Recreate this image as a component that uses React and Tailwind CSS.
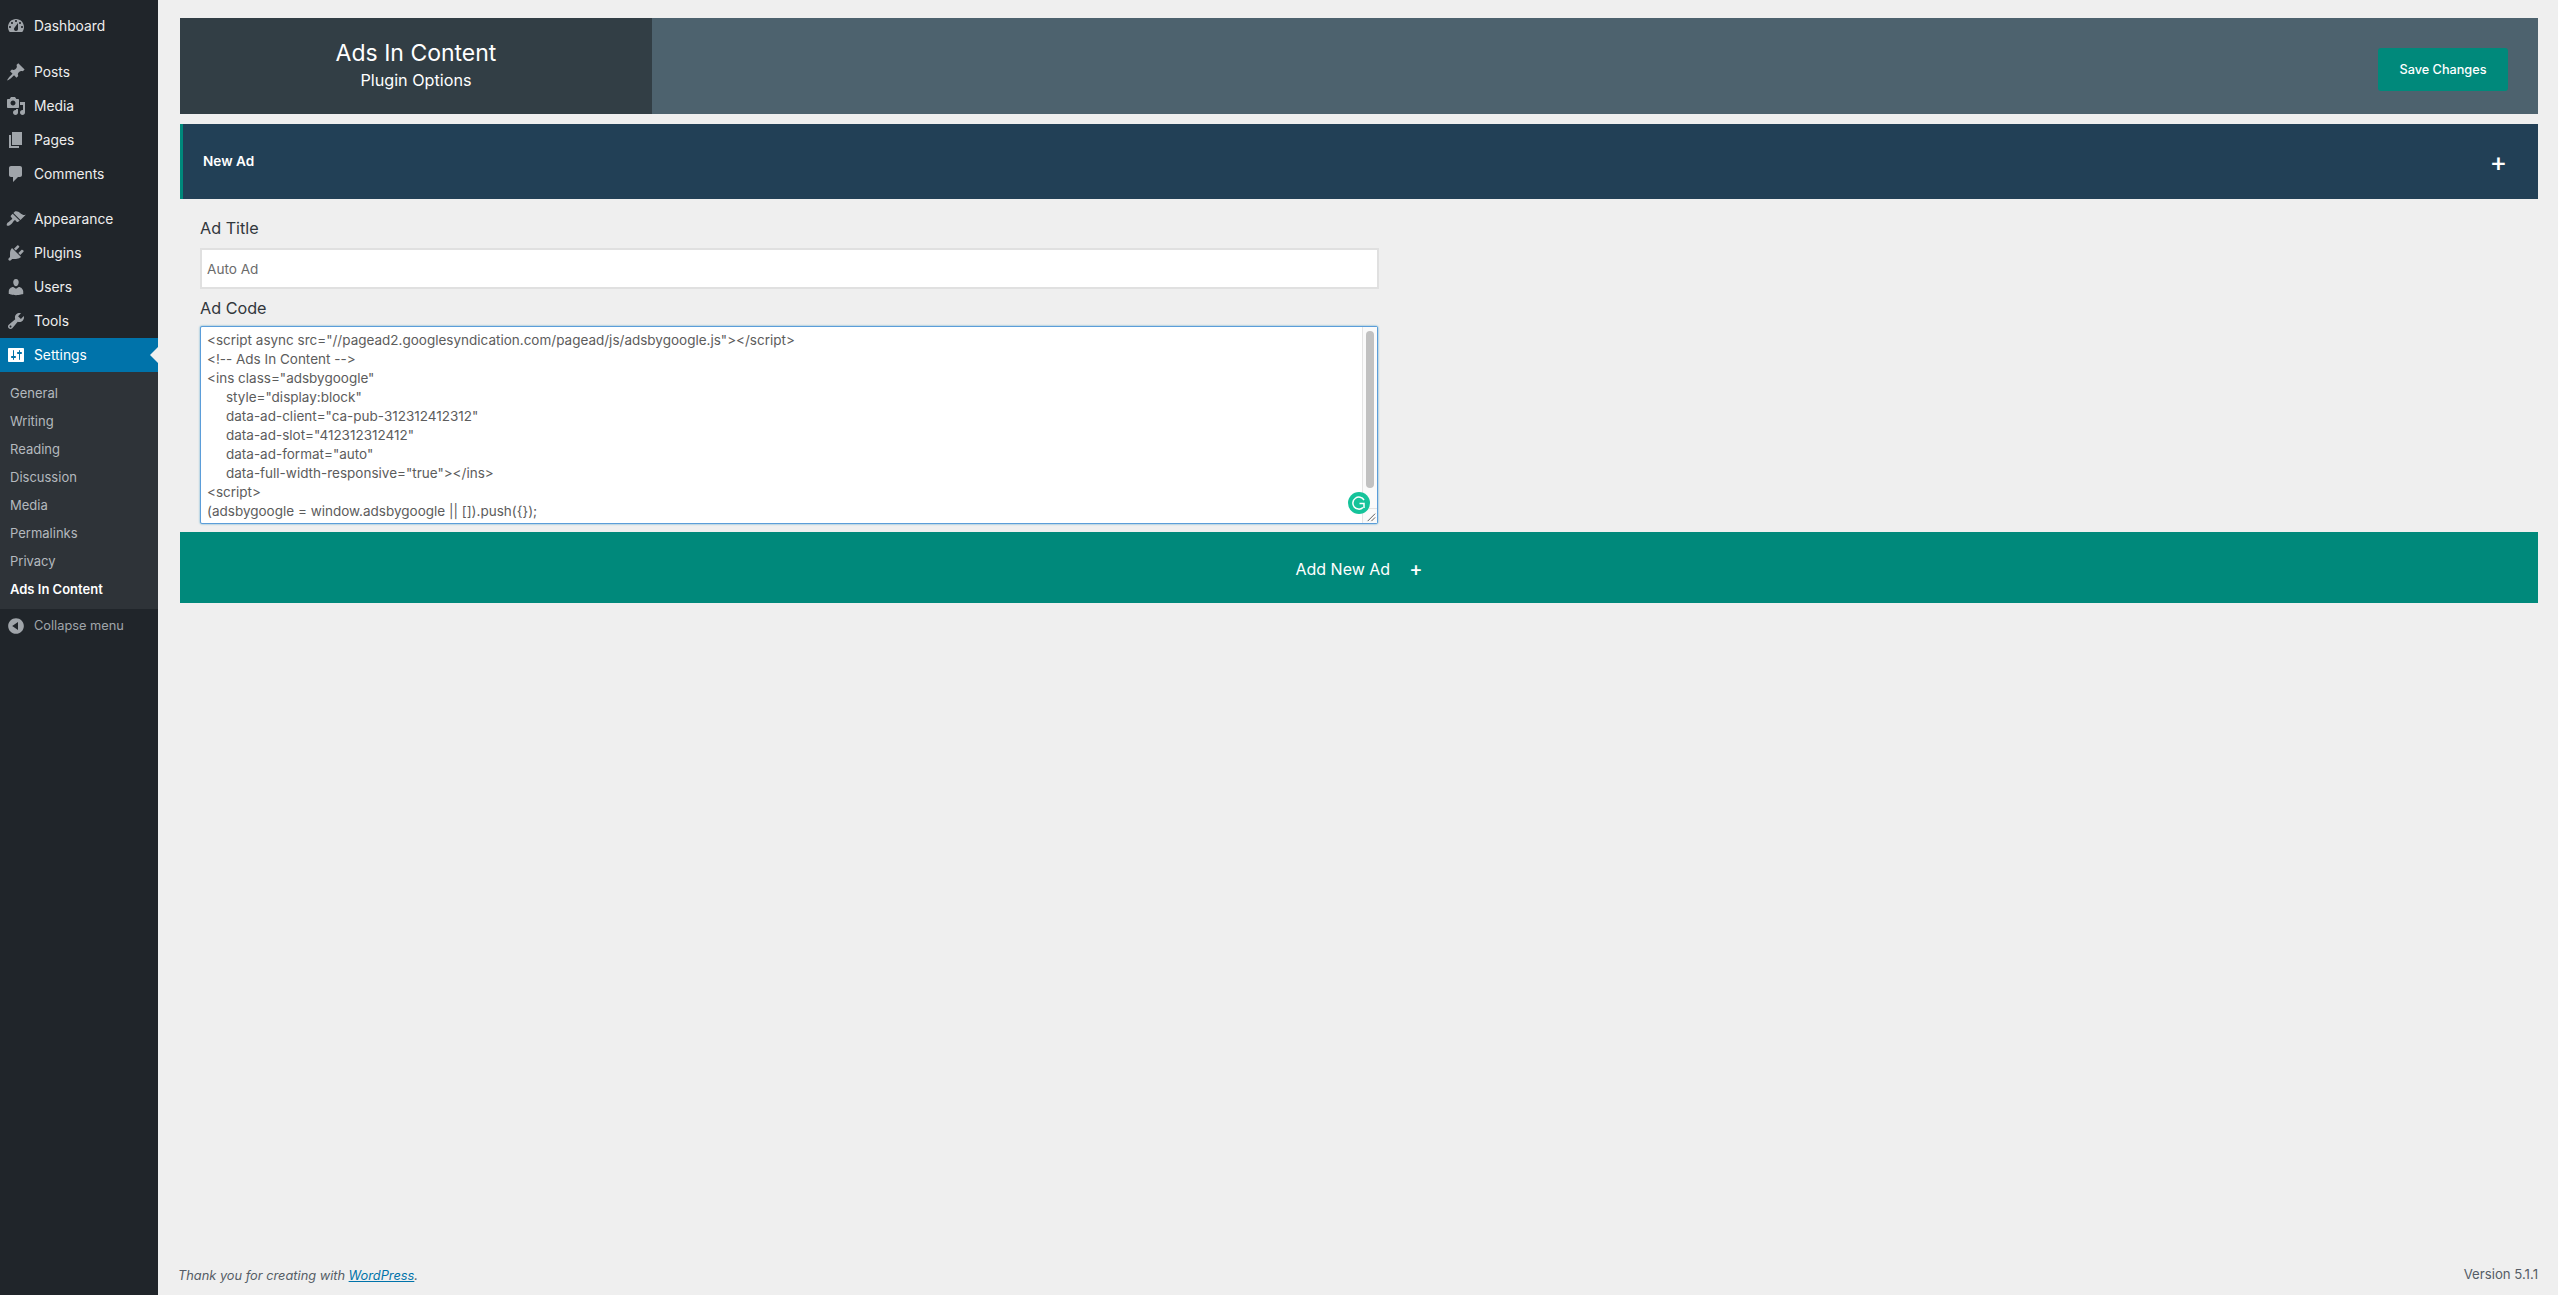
import React from "react";

const icons = {
  dashboard:
    "M3.76 16h12.48c1.1-1.37 1.76-3.11 1.76-5 0-4.42-3.58-8-8-8s-8 3.58-8 8c0 1.89.66 3.63 1.76 5zM10 4c.55 0 1 .45 1 1s-.45 1-1 1-1-.45-1-1 .45-1 1-1zM6 6c.55 0 1 .45 1 1s-.45 1-1 1-1-.45-1-1 .45-1 1-1zm8 0c.55 0 1 .45 1 1s-.45 1-1 1-1-.45-1-1 .45-1 1-1zm-5.37 5.55L12 7v6c0 1.1-.9 2-2 2s-2-.9-2-2c0-.57.24-1.08.63-1.45zM4 10c.55 0 1 .45 1 1s-.45 1-1 1-1-.45-1-1 .45-1 1-1zm12 0c.55 0 1 .45 1 1s-.45 1-1 1-1-.45-1-1 .45-1 1-1z",
  posts:
    "M10.44 3.02l1.82-1.82 6.36 6.35-1.83 1.82c-1.05-.68-2.48-.57-3.41.36l-.75.75c-.92.93-1.04 2.35-.35 3.41l-1.83 1.82-2.41-2.41-2.8 2.79c-.42.42-3.38 2.71-3.8 2.29s1.86-3.39 2.28-3.81l2.79-2.79L4.1 9.36l1.83-1.82c1.05.69 2.48.57 3.4-.36l.75-.75c.93-.92 1.05-2.35.36-3.41z",
  media:
    "M13 11V4c0-.55-.45-1-1-1h-1.67L9 1H5L3.67 3H2c-.55 0-1 .45-1 1v7c0 .55.45 1 1 1h10c.55 0 1-.45 1-1zM7 4.5c1.38 0 2.5 1.12 2.5 2.5S8.38 9.5 7 9.5 4.5 8.38 4.5 7 5.62 4.5 7 4.5zM14 6h5v10.5c0 1.38-1.12 2.5-2.5 2.5S14 17.88 14 16.5s1.12-2.5 2.5-2.5c.17 0 .34.02.5.05V9h-3V6zm-4 8.05V13h2v3.5c0 1.38-1.12 2.5-2.5 2.5S7 17.88 7 16.5 8.12 14 9.5 14c.17 0 .34.02.5.05z",
  pages: "M6 15V2h10v13H6zm-1 1h8v2H3V5h2v11z",
  comments:
    "M5 2h9c1.1 0 2 .9 2 2v7c0 1.1-.9 2-2 2h-2l-5 5v-5H5c-1.1 0-2-.9-2-2V4c0-1.1.9-2 2-2z",
  appearance:
    "M14.48 11.06L7.41 3.99l1.5-1.5c.5-.56 2.3-.47 3.51.32 1.21.8 1.43 1.28 2.91 2.1 1.18.64 2.45 1.26 4.45.85zm-.71.71L6.7 4.7 4.93 6.47c-.39.39-.39 1.02 0 1.41l1.06 1.06c.39.39.39 1.03 0 1.42-.6.6-1.43 1.11-2.21 1.69-.35.26-.7.53-1.01.84C1.43 13.23.1 15.65 1 16.55c.91.9 3.33-.43 4.66-1.76.31-.31.58-.66.84-1.01.58-.78 1.09-1.61 1.69-2.21.39-.39 1.02-.39 1.41 0l1.06 1.06c.39.39 1.02.39 1.41 0z",
  plugins:
    "M13.11 4.36L9.87 7.6 8 5.73l3.24-3.24c.35-.34 1.05-.2 1.56.32.52.51.66 1.21.31 1.55zm-8 1.77l.91-1.12 9.01 9.01-1.19.84c-.71.71-2.63 1.16-3.82 1.16H6.14L4.9 17.26c-.59.59-1.54.59-2.12 0-.59-.58-.59-1.53 0-2.12l1.24-1.24v-3.88c0-1.13.4-3.19 1.09-3.89zm7.26 3.97l3.24-3.24c.34-.35 1.04-.2 1.55.31.52.52.66 1.22.32 1.57l-3.24 3.24z",
  users:
    "M10 9.25c-2.27 0-2.73-3.44-2.73-3.44C7 4.02 7.82 2 9.97 2c2.16 0 2.98 2.02 2.71 3.81 0 0-.41 3.44-2.68 3.44zm0 2.57L12.72 10c2.39 0 4.52 2.33 4.52 4.53v2.49s-3.65 1.13-7.24 1.13c-3.65 0-7.24-1.13-7.24-1.13v-2.49c0-2.25 1.94-4.48 4.47-4.48z",
  tools:
    "M16.68 9.77c-1.34 1.34-3.3 1.67-4.95.99l-5.41 6.52c-.99.99-2.59.99-3.58 0s-.99-2.59 0-3.57l6.52-5.42c-.68-1.65-.35-3.61.99-4.95 1.28-1.28 3.12-1.62 4.72-1.06l-2.89 2.89 2.82 2.82 2.86-2.87c.53 1.58.18 3.39-1.08 4.67zM3.81 16.21c.4.39 1.04.39 1.43 0 .4-.4.4-1.04 0-1.43-.39-.4-1.03-.4-1.43 0-.39.39-.39 1.03 0 1.43z",
  settings:
    "M18 16V4c0-.55-.45-1-1-1H3c-.55 0-1 .45-1 1v12c0 .55.45 1 1 1h14c.55 0 1-.45 1-1zM8 11h1c.55 0 1 .45 1 1s-.45 1-1 1H8v1.5c0 .28-.22.5-.5.5s-.5-.22-.5-.5V13H6c-.55 0-1-.45-1-1s.45-1 1-1h1V5.5c0-.28.22-.5.5-.5s.5.22.5.5V11zm5-2h-1c-.55 0-1-.45-1-1s.45-1 1-1h1V5.5c0-.28.22-.5.5-.5s.5.22.5.5V7h1c.55 0 1 .45 1 1s-.45 1-1 1h-1v5.5c0 .28-.22.5-.5.5s-.5-.22-.5-.5V9z",
  collapse:
    "M10 2.16c4.33 0 7.84 3.51 7.84 7.84s-3.51 7.84-7.84 7.84S2.16 14.33 2.16 10 5.71 2.16 10 2.16zm2 11.72V6.12L6.18 9.97z",
};

const Dashicon = ({ name, className }) => (
  <svg viewBox="0 0 20 20" className={className} fill="currentColor" fillRule="evenodd">
    <path d={icons[name]} />
  </svg>
);

const MenuItem = ({ icon, label }) => (
  <li className="flex h-[34px] items-center pl-[6px] text-[13.8px] text-[#eeeeee]">
    <Dashicon name={icon} className="h-5 w-5 shrink-0 text-[#a0a5aa]" />
    <span className="ml-2">{label}</span>
  </li>
);

const submenu = ["General", "Writing", "Reading", "Discussion", "Media", "Permalinks", "Privacy"];

const adCode = `<script async src="//pagead2.googlesyndication.com/pagead/js/adsbygoogle.js"></script>
<!-- Ads In Content -->
<ins class="adsbygoogle"
     style="display:block"
     data-ad-client="ca-pub-312312412312"
     data-ad-slot="412312312412"
     data-ad-format="auto"
     data-full-width-responsive="true"></ins>
<script>
(adsbygoogle = window.adsbygoogle || []).push({});
</script>`;

const Sidebar = () => (
  <aside className="w-[158px] shrink-0 bg-[#20252a]">
    <ul className="pt-[9px]">
      <MenuItem icon="dashboard" label="Dashboard" />
    </ul>
    <ul className="mt-3">
      <MenuItem icon="posts" label="Posts" />
      <MenuItem icon="media" label="Media" />
      <MenuItem icon="pages" label="Pages" />
      <MenuItem icon="comments" label="Comments" />
    </ul>
    <ul className="mt-[11px]">
      <MenuItem icon="appearance" label="Appearance" />
      <MenuItem icon="plugins" label="Plugins" />
      <MenuItem icon="users" label="Users" />
      <MenuItem icon="tools" label="Tools" />
    </ul>
    <div className="relative flex h-[34px] items-center bg-[#0073aa] pl-[6px] text-[13.8px] text-white">
      <Dashicon name="settings" className="h-5 w-5 shrink-0" />
      <span className="ml-2">Settings</span>
      <span className="absolute right-0 top-[9px] h-0 w-0 border-y-[8px] border-r-[8px] border-y-transparent border-r-[#efefef]" />
    </div>
    <ul className="bg-[#2e3338] pb-[5px] pt-[8px] text-[13px]">
      {submenu.map((item) => (
        <li key={item} className="flex h-[28px] items-center pl-[10px] text-[#b4b9be]">
          {item}
        </li>
      ))}
      <li className="flex h-[28px] items-center pl-[10px] font-semibold text-white">Ads In Content</li>
    </ul>
    <div className="flex h-[34px] items-center pl-[6px] text-[12.8px] text-[#a0a5aa]">
      <Dashicon name="collapse" className="h-5 w-5 shrink-0" />
      <span className="ml-2">Collapse menu</span>
    </div>
  </aside>
);

const App = () => {
  return (
    <div className="flex min-h-screen bg-[#efefef] font-['Inter','Liberation_Sans',sans-serif]">
      <Sidebar />
      <main className="flex min-w-0 flex-1 flex-col pl-[22px] pr-5">
        <header className="mt-[18px] flex h-[96px] items-center justify-between bg-[#4d626e]">
          <div className="flex h-full w-[472px] flex-col items-center justify-center bg-[#323e45] pb-[4px] text-white">
            <h1 className="text-[23px] leading-[32px]">Ads In Content</h1>
            <p className="text-[16.2px] leading-[22px]">Plugin Options</p>
          </div>
          <button className="mr-[30px] mt-[7px] h-[43px] w-[130px] rounded-[3px] bg-[#00897b] text-[12.7px] font-medium text-white">
            Save Changes
          </button>
        </header>

        <section className="mt-[10px] flex h-[75px] items-center justify-between border-l-[3px] border-[#00897b] bg-[#224056] pl-[20px] pr-[31px] text-white">
          <span className="text-[13.6px] font-semibold">New Ad</span>
          <span className="text-[26px] font-medium leading-none">+</span>
        </section>

        <div className="pl-[20px]">
          <label className="mt-[19px] block text-[16.2px] leading-[20px] text-[#32373c]">Ad Title</label>
          <input
            readOnly
            value="Auto Ad"
            className="mt-[10px] block h-[41px] w-[1179px] border-2 border-[#e0e0e0] bg-white px-[5px] text-[13.6px] text-[#6b6b6b] outline-none"
          />
          <label className="mt-[9px] block text-[16.2px] leading-[20px] text-[#32373c]">Ad Code</label>
          <div className="relative mt-2 h-[198px] w-[1178px]">
            <textarea
              readOnly
              defaultValue={adCode}
              className="block h-full w-full resize-none overflow-hidden rounded-[2px] border border-[#5b9dd9] bg-white pl-[6px] pt-[4px] font-['Inter','Liberation_Sans',sans-serif] text-[13.5px] leading-[19px] text-[#5c5c5c] shadow-[0_0_2px_rgba(30,140,190,0.8)] outline-none [font-feature-settings:'calt'_0,'liga'_0]"
            />
            <div className="absolute bottom-px right-px top-px w-[15px] border-l border-[#e4e4e4] bg-[#fafafa]">
              <div className="absolute left-[3px] top-[4px] h-[157px] w-2 rounded bg-[#c1c1c1]" />
              <svg viewBox="0 0 15 15" className="absolute bottom-0 left-0 h-[15px] w-[14px] border-t border-[#e4e4e4]">
                <path d="M5 13L13 5M9 13L13 9" stroke="#555555" strokeWidth="1" />
              </svg>
            </div>
            <div className="absolute bottom-[10px] right-[8px] h-[22px] w-[22px] rounded-full bg-[#15c39a]">
              <svg viewBox="0 0 22 22" className="h-full w-full" fill="none" stroke="#ffffff" strokeWidth="1.5">
                <path d="M16 8A6 6 0 1 0 15 15.5" />
                <path d="M11.5 11.5h4.5v4.5" />
              </svg>
            </div>
          </div>
        </div>

        <button className="mt-2 flex h-[71px] items-center justify-center bg-[#00897b] pt-[3px] text-[16px] text-white">
          <span>Add New Ad</span>
          <span className="ml-[19px] text-[20px] font-medium leading-none">+</span>
        </button>

        <footer className="-ml-[2px] mb-[10px] mt-auto flex items-center justify-between text-[12.8px] text-[#555d66]">
          <p className="italic">
            Thank you for creating with <a className="text-[#0073aa] underline">WordPress</a>.
          </p>
          <p className="text-[13.2px]">Version 5.1.1</p>
        </footer>
      </main>
    </div>
  );
};

export default App;
